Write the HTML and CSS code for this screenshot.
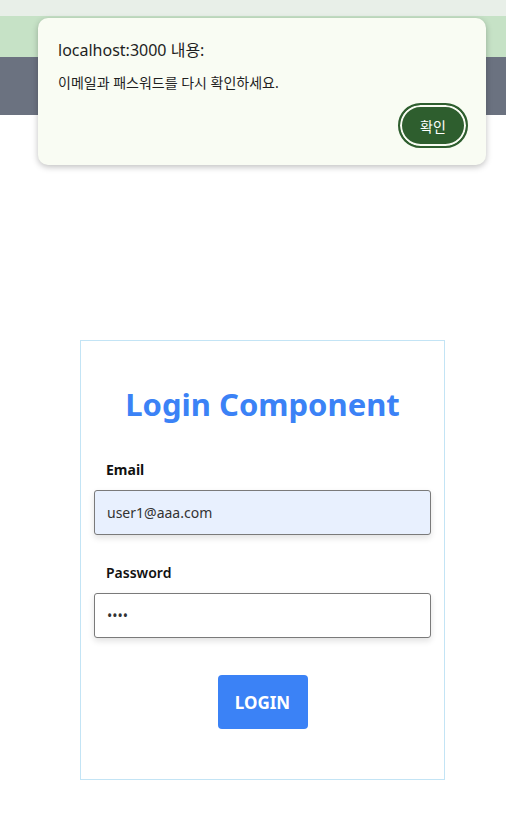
FILE: index.html
```html
<!doctype html>
<html>
  <head>
    <meta charset="UTF-8" />
    <meta name="viewport" content="width=device-width, initial-scale=1.0" />
    <title>Login</title>
    <link rel="stylesheet" href="styles.css">
  </head>
  <body>
    <div class="browser-strip"></div>
    <div class="top-band"></div>
    <div class="nav-bar"></div>

    <div class="login-card">
      <h1 class="login-title">Login Component</h1>

      <div class="field">
        <label class="field-label label-email">Email</label>
        <input class="field-input filled" type="text" value="user1@aaa.com" />
      </div>

      <div class="field">
        <label class="field-label label-password">Password</label>
        <input class="field-input" type="password" value="1111" />
      </div>

      <div class="actions">
        <button class="login-btn">LOGIN</button>
      </div>
    </div>

    <div class="alert-dialog">
      <div class="alert-title">localhost:3000 내용:</div>
      <div class="alert-message">이메일과 패스워드를 다시 확인하세요.</div>
      <div class="alert-actions">
        <button class="alert-btn">확인</button>
      </div>
    </div>
  </body>
</html>
```

FILE: styles.css
```css
body {
  font-family: "Noto Sans", "Noto Sans CJK KR", sans-serif;
  margin: 0;
  background: white;
  color: #111;
}

.browser-strip {
  height: 16px;
  background: #e8efe8;
}

.top-band {
  height: 41px;
  background: #c6e2c6;
}

.nav-bar {
  height: 58px;
  background: #6b7280;
}

.login-card {
  width: 337px;
  margin: 225px 0 0 80px;
  padding: 38px 13px 50px;
  border: 1px solid #c3e4f5;
}

.login-title {
  margin: 0 0 31px;
  text-align: center;
  font-size: 31px;
  font-weight: 700;
  color: #3b82f6;
  line-height: 50px;
}

.field {
  margin-bottom: 28px;
}

.field-label {
  display: block;
  padding-left: 12px;
  margin-bottom: 10px;
  font-size: 14px;
  line-height: 20px;
  color: #111;
}

.label-email {
  font-weight: 700;
}

.label-password {
  font-weight: 600;
}

.field-input {
  display: block;
  box-sizing: border-box;
  width: 100%;
  height: 45px;
  padding: 0 12px;
  border: 1px solid #7a7a7a;
  border-radius: 3px;
  background: white;
  box-shadow: 0 3px 6px rgba(0, 0, 0, 0.12);
  font-family: "Noto Sans", sans-serif;
  font-size: 14px;
  color: #333;
}

.field-input.filled {
  background: #e8f0fe;
}

.actions {
  display: flex;
  justify-content: center;
  padding-top: 9px;
}

.login-btn {
  width: 90px;
  height: 54px;
  border: none;
  border-radius: 4px;
  background: #3b82f6;
  color: white;
  font-family: "Noto Sans", sans-serif;
  font-size: 17px;
  font-weight: 700;
  cursor: pointer;
}

.alert-dialog {
  position: absolute;
  top: 18px;
  left: 38px;
  width: 448px;
  height: 147px;
  box-sizing: border-box;
  padding: 20px 18px 0 20px;
  background: #f9fcf3;
  border-radius: 10px;
  box-shadow: 0 2px 6px rgba(0, 0, 0, 0.25);
}

.alert-title {
  font-size: 16px;
  line-height: 24px;
  color: #1f1f1f;
}

.alert-message {
  margin-top: 11px;
  font-size: 14px;
  line-height: 20px;
  color: #1f1f1f;
}

.alert-actions {
  display: flex;
  justify-content: flex-end;
  margin-top: 10px;
}

.alert-btn {
  width: 70px;
  height: 45px;
  border: 2px solid #2e5e2e;
  border-radius: 23px;
  background: #2e5e2e;
  box-shadow: inset 0 0 0 2px #f9fcf3;
  color: white;
  font-family: "Noto Sans CJK KR", sans-serif;
  font-size: 14px;
  cursor: pointer;
}
```
